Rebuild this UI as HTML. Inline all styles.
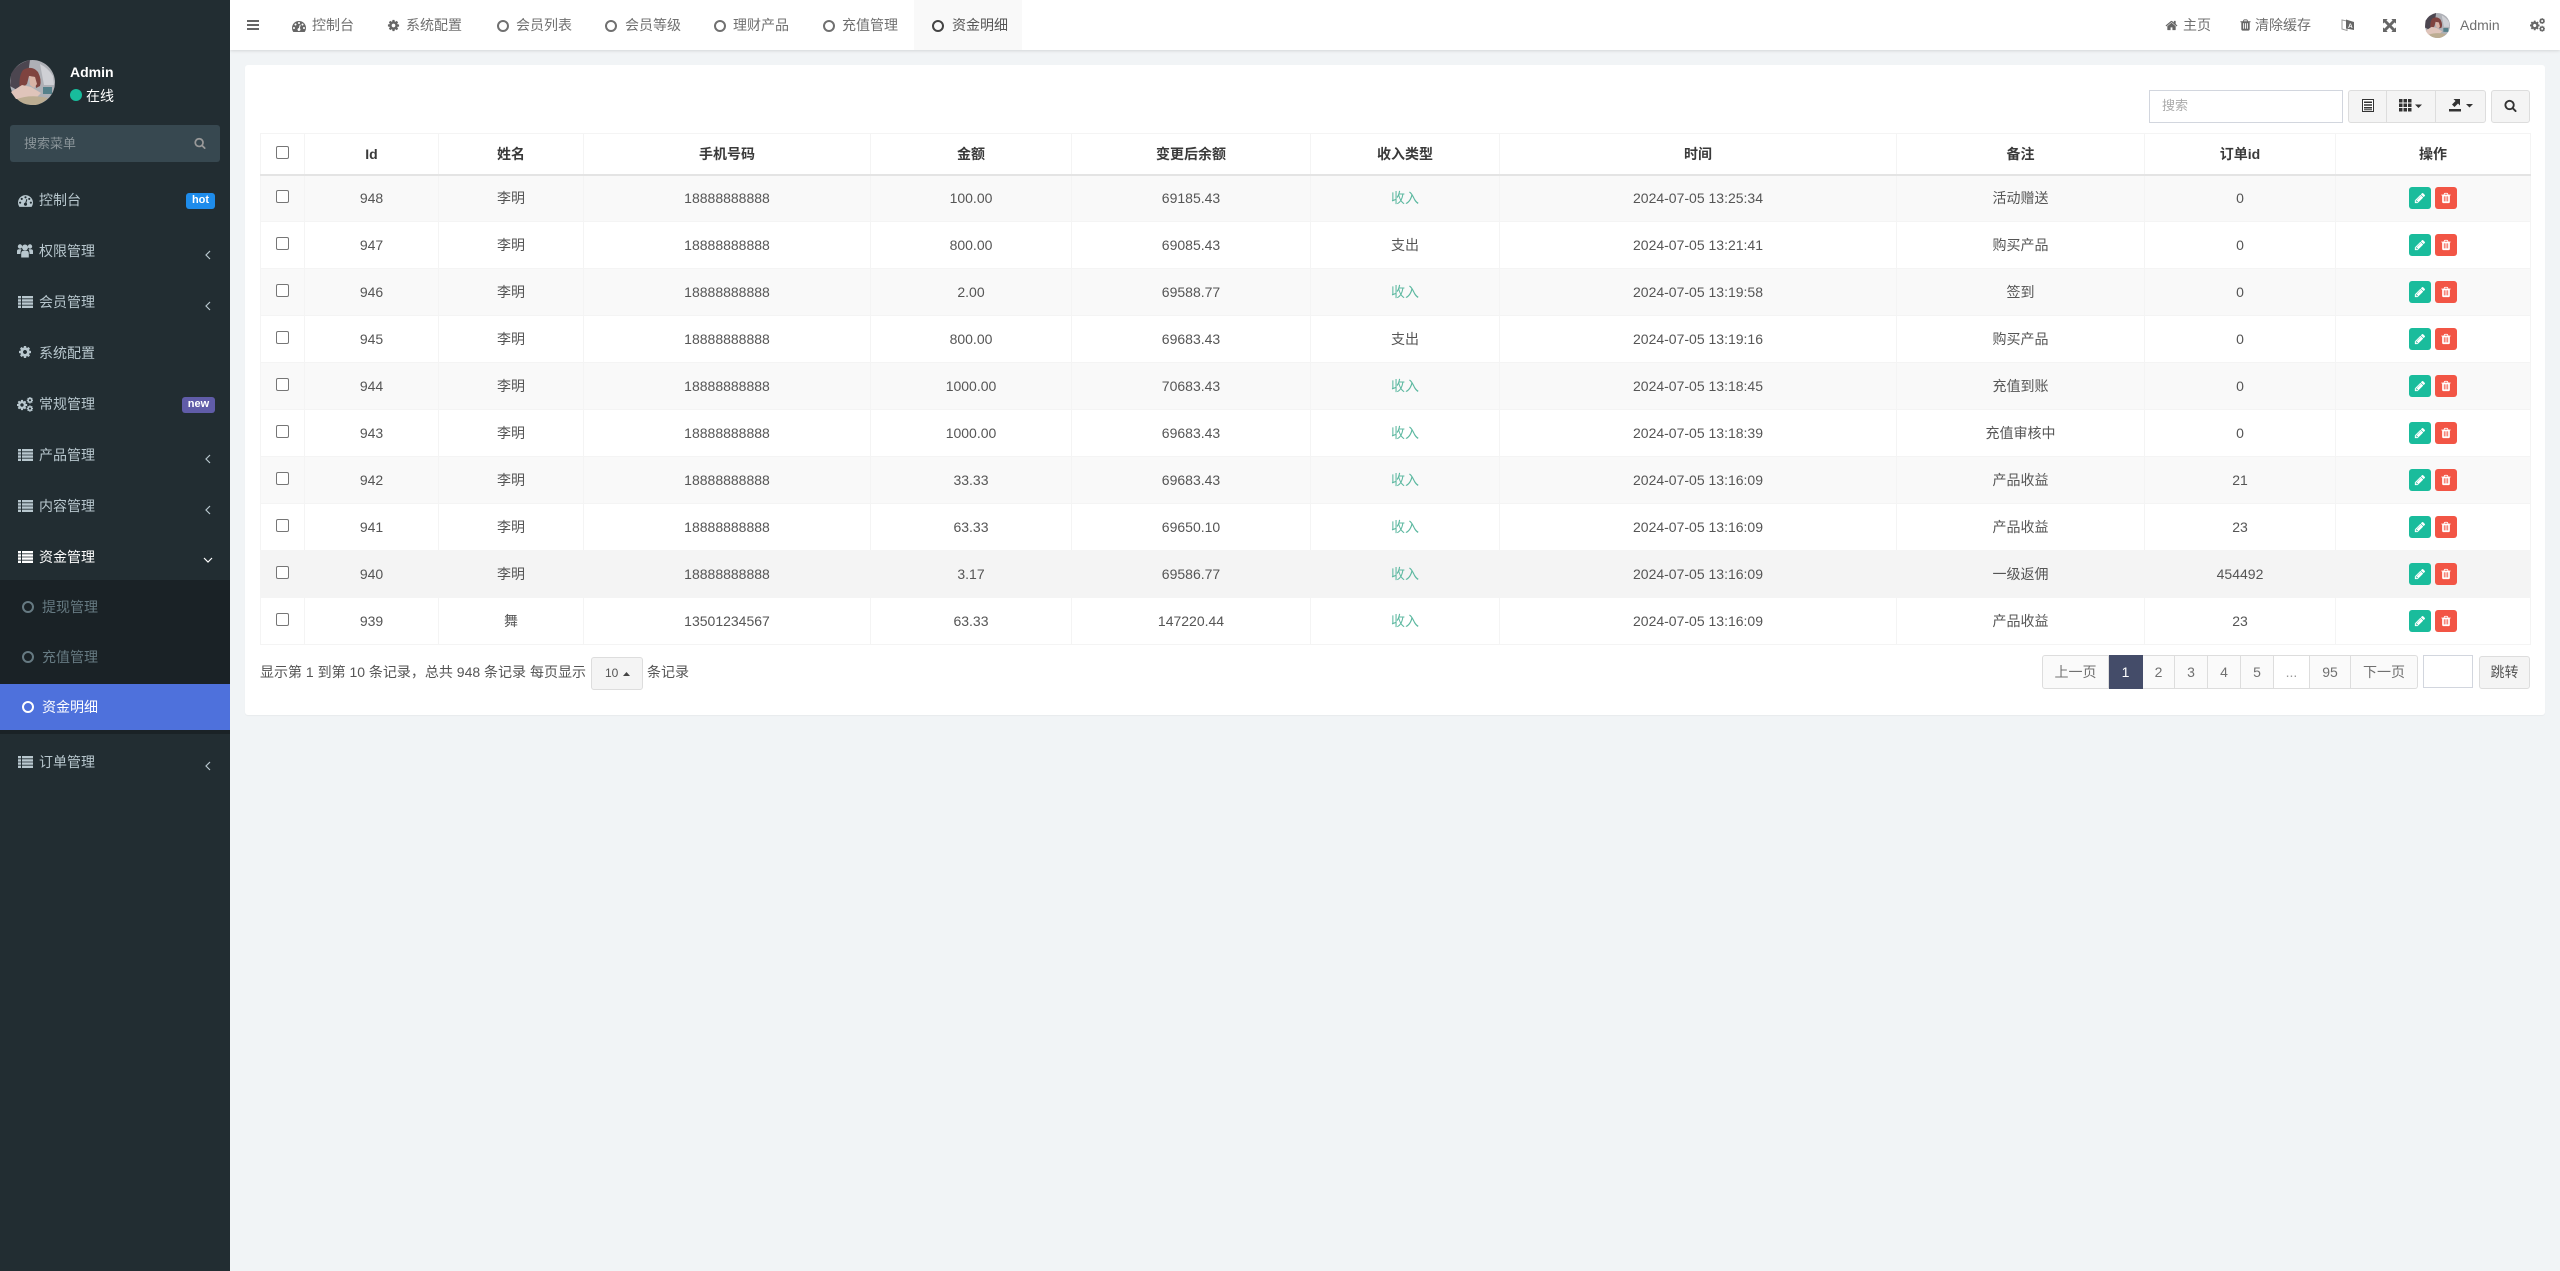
<!DOCTYPE html>
<html lang="zh"><head><meta charset="utf-8"><title>资金明细</title>
<style>
*{box-sizing:border-box}
html,body{margin:0;padding:0;width:2560px;height:1271px;overflow:hidden;background:#f1f4f6;font-family:"Liberation Sans","Noto Sans CJK SC",sans-serif;font-size:14px;color:#333}
.a{position:absolute;white-space:nowrap}
svg{display:block;position:absolute;overflow:visible}
#side{position:absolute;left:0;top:0;width:230px;height:1271px;background:#222d32}
#top{position:absolute;left:230px;top:0;width:2330px;height:50px;background:#fff;box-shadow:0 1px 3px rgba(0,0,0,.12)}
.m{position:absolute;left:39px;color:#b8c7ce;line-height:20px;height:20px;white-space:nowrap}
.i{fill:#b8c7ce}
.h{position:absolute;color:#707070;line-height:20px;top:15px;white-space:nowrap}
.hi{fill:#666}
#panel{position:absolute;left:245px;top:65px;width:2300px;height:650px;background:#fff;border-radius:3px;box-shadow:0 1px 1px rgba(0,0,0,.04)}
table{position:absolute;left:260px;top:133px;border-collapse:collapse;table-layout:fixed;width:2270px;font-size:14px}
th,td{border:1px solid #f4f4f4;text-align:center;padding:0;font-weight:normal;color:#555}
th{height:41px;font-weight:bold;color:#3a3a3a;border-bottom:2px solid #e4e4e4}
td{height:47px}
tbody tr:nth-child(odd){background:#f9f9f9}
tbody tr.hv{background:#f4f4f4}
td.g{color:#5cb8a0}
.cb{display:block;width:13px;height:13px;border:1px solid #767676;border-radius:2px;background:#fff;margin:-3px auto 0}
.ed,.de{display:inline-block;position:relative;width:22px;height:22px;border-radius:3px;vertical-align:middle}
.ed{background:#1abc9c;margin-right:4px}.de{background:#f25545}
.ed svg,.de svg{left:5px;top:5px;width:12px;height:12px;fill:#fff}
.btn{position:absolute;background:#f4f4f4;border:1px solid #ddd}
.pg{position:absolute;top:655px;height:34px;line-height:32px;text-align:center;background:#fafafa;border:1px solid #ddd;border-left:0;color:#707070}
</style></head><body>
<svg width="0" height="0" style="position:absolute"><defs>
<symbol id="cog" viewBox="0 0 1792 1792"><path d="M1152 896q0-106-75-181t-181-75-181 75-75 181 75 181 181 75 181-75 75-181zm512-109v222q0 12-8 23t-20 13l-185 28q-19 54-39 91 35 50 107 138 10 12 10 25t-9 23q-27 37-99 108t-94 71q-12 0-26-9l-138-108q-44 23-91 38-16 136-29 186-7 28-36 28h-222q-14 0-24.500-8.500t-11.500-21.500l-28-184q-49-16-90-37l-141 107q-10 9-25 9-14 0-25-11-126-114-165-168-7-10-7-23 0-12 8-23 15-21 51-66.500t54-70.500q-27-50-41-99l-183-27q-13-2-21-12.500t-8-23.500v-222q0-12 8-23t19-13l186-28q14-46 39-92-40-57-107-138-10-12-10-24 0-10 9-23 26-36 98.500-107.500t94.500-71.500q13 0 26 10l138 107q44-23 91-38 16-136 29-186 7-28 36-28h222q14 0 24.500 8.500t11.500 21.500l28 184q49 16 90 37l142-107q9-9 24-9 13 0 25 10 129 119 165 170 7 8 7 22 0 12-8 23-15 21-51 66.500t-54 70.500q26 50 41 98l183 28q13 2 21 12.500t8 23.500z"/></symbol>
<symbol id="dash" viewBox="0 0 1792 1792"><path d="M384 1152q0-53-37.500-90.500t-90.500-37.500-90.500 37.500-37.500 90.500 37.500 90.500 90.500 37.500 90.500-37.500 37.500-90.500zm192-448q0-53-37.500-90.500t-90.500-37.500-90.500 37.500-37.500 90.500 37.500 90.500 90.500 37.500 90.500-37.500 37.500-90.500zm428 481l101-382q6-26-7.500-48.500t-38.500-29.500-48 6.500-30 39.500l-101 382q-60 5-107 43.500t-63 98.500q-20 77 20 146t117 89 146-20 89-117q16-60-6-117t-72-91zm660-33q0-53-37.500-90.500t-90.500-37.500-90.500 37.500-37.500 90.500 37.500 90.500 90.500 37.500 90.500-37.500 37.500-90.500zm-640-640q0-53-37.500-90.500t-90.500-37.500-90.500 37.500-37.500 90.500 37.500 90.500 90.500 37.500 90.500-37.500 37.500-90.500zm448 192q0-53-37.500-90.500t-90.500-37.500-90.500 37.500-37.500 90.500 37.500 90.500 90.500 37.500 90.500-37.500 37.500-90.500zm320 448q0 261-141 483-19 29-54 29h-1402q-35 0-54-29-141-221-141-483 0-182 71-348t191-286 286-191 348-71 348 71 286 191 191 286 71 348z"/></symbol>
<symbol id="list" viewBox="0 0 15 12"><path d="M0 0h3v2.400H0zM4 0h11v2.400H4zM0 3.200h3v2.400H0zM4 3.200h11v2.400H4zM0 6.400h3v2.400H0zM4 6.400h11v2.400H4zM0 9.600h3V12H0zM4 9.600h11V12H4z"/></symbol>
<symbol id="cogs" viewBox="0 0 16 15"><use href="#cog" x="-1" y="2" width="12" height="12"/><use href="#cog" x="9.200" y="-.5" width="7.500" height="7.500"/><use href="#cog" x="9.200" y="7.800" width="7.500" height="7.500"/></symbol>
<symbol id="trash" viewBox="0 0 1792 1792"><path d="M704 1376v-704q0-14-9-23t-23-9h-64q-14 0-23 9t-9 23v704q0 14 9 23t23 9h64q14 0 23-9t9-23zm256 0v-704q0-14-9-23t-23-9h-64q-14 0-23 9t-9 23v704q0 14 9 23t23 9h64q14 0 23-9t9-23zm256 0v-704q0-14-9-23t-23-9h-64q-14 0-23 9t-9 23v704q0 14 9 23t23 9h64q14 0 23-9t9-23zm-544-992h448l-48-117q-7-9-17-11h-317q-10 2-17 11zm928 32v64q0 14-9 23t-23 9h-96v948q0 83-47 143.500t-113 60.500h-832q-66 0-113-58.500t-47-141.500v-952h-96q-14 0-23-9t-9-23v-64q0-14 9-23t23-9h309l70-167q15-37 54-63t79-26h320q40 0 79 26t54 63l70 167h309q14 0 23 9t9 23z"/></symbol>
<symbol id="pen" viewBox="0 0 1792 1792"><path d="M491 1536l91-91-235-235-91 91v107h128v128h107zm523-928q0-22-22-22-10 0-17 7l-542 542q-7 7-7 17 0 22 22 22 10 0 17-7l542-542q7-7 7-17zm-54-192l416 416-832 832h-416v-416zm683 96q0 53-37 90l-166 166-416-416 166-165q36-38 90-38 53 0 91 38l235 234q37 39 37 91z"/></symbol>
<symbol id="search" viewBox="0 0 1792 1792"><path d="M1216 832q0-185-131.500-316.500t-316.500-131.500-316.500 131.500-131.500 316.500 131.500 316.500 316.500 131.500 316.500-131.500 131.500-316.500zm512 832q0 52-38 90t-90 38q-54 0-90-38l-343-342q-179 124-399 124-143 0-273.500-55.500t-225-150-150-225-55.500-273.500 55.500-273.500 150-225 225-150 273.500-55.500 273.500 55.500 225 150 150 225 55.500 273.500q0 220-124 399l343 343q37 37 37 90z"/></symbol>
<symbol id="home" viewBox="0 0 1792 1792"><path d="M1472 992v480q0 26-19 45t-45 19h-384v-384h-256v384h-384q-26 0-45-19t-19-45v-480q0-1 .5-3t.5-3l575-474 575 474q1 2 1 6zm223-69l-62 74q-8 9-21 11h-3q-13 0-21-7l-692-577-692 577q-12 8-24 7-13-2-21-11l-62-74q-8-10-7-23.500t11-21.500l719-599q32-26 76-26t76 26l244 204v-195q0-14 9-23t23-9h192q14 0 23 9t9 23v408l219 182q10 8 11 21.500t-7 23.500z"/></symbol>
<symbol id="ava" viewBox="0 0 45 45"><circle cx="22.500" cy="22.500" r="22.500" fill="#aeb0b6"/><path d="M1 14Q7 3 20 0L18 14 7 30 0 26Z" fill="#4c4650"/><path d="M13 10Q22 5 28 12 32 20 30 26L26 28 25 17 19 16 17 24 10 30Q8 17 13 10Z" fill="#7f433f"/><path d="M19 16L25 17 27 24 24 28 20 25Z" fill="#d9b3a6"/><path d="M1 32L12 25 21 27 31 33 27 37 15 39 6 39Z" fill="#dfc4ba"/><path d="M7 39Q20 34 38 38 30 46 22 45 13 45 7 39Z" fill="#bcad92"/><path d="M33 27h9v7h-9z" fill="#55808a"/><path d="M30 4Q38 8 43 16L44 25 34 25Z" fill="#cfd0d5"/></symbol>
</defs></svg>

<div id="top"></div>
<div id="side">
<svg style="left:10px;top:60px" width="45" height="45"><use href="#ava"/></svg>
<div class="a" style="left:70px;top:64px;color:#fff;font-weight:bold;line-height:16px">Admin</div>
<div class="a" style="left:70px;top:89px;width:12px;height:12px;border-radius:50%;background:#18bc9c"></div>
<div class="a" style="left:86px;top:86px;color:#fff;line-height:20px">在线</div>
<div class="a" style="left:10px;top:125px;width:210px;height:37px;background:#374850;border-radius:3px"></div>
<div class="a" style="left:24px;top:134px;color:#8a9499;font-size:13px;line-height:19px">搜索菜单</div>
<svg style="left:194px;top:137px;fill:#999" width="12" height="12"><use href="#search"/></svg>

<svg class="i" style="left:18px;top:193px" width="15" height="15"><use href="#dash"/></svg><div class="m" style="top:190px">控制台</div>
<div class="a" style="left:186px;top:193px;width:29px;height:16px;background:#1e8ceb;border-radius:3px;color:#fff;font-size:11px;font-weight:bold;text-align:center;line-height:15px">hot</div>

<svg class="i" style="left:17px;top:244px" width="16" height="14" viewBox="0 0 16 14"><circle cx="3" cy="2.500" r="2.200"/><circle cx="13" cy="2.500" r="2.200"/><circle cx="8" cy="3.500" r="3"/><path d="M0 10V7q0-1.800 2-1.800h2.500Q3.300 7 3.500 10zM16 10V7q0-1.800-2-1.800h-2.500q1.200 1.800 1 4.800zM4.200 13.500V9.500q0-2.800 2.300-2.800h3q2.300 0 2.300 2.800v4z"/></svg><div class="m" style="top:241px">权限管理</div>
<svg style="left:204px;top:250px;fill:none;stroke:#b8c7ce;stroke-width:1.200" width="8" height="10"><path d="M6 1L2 5l4 4"/></svg>

<svg class="i" style="left:18px;top:296px" width="15" height="12"><use href="#list"/></svg><div class="m" style="top:292px">会员管理</div>
<svg style="left:204px;top:301px;fill:none;stroke:#b8c7ce;stroke-width:1.200" width="8" height="10"><path d="M6 1L2 5l4 4"/></svg>

<svg class="i" style="left:18px;top:345px" width="14" height="14"><use href="#cog"/></svg><div class="m" style="top:343px">系统配置</div>

<svg class="i" style="left:17px;top:397px" width="16" height="15"><use href="#cogs"/></svg><div class="m" style="top:394px">常规管理</div>
<div class="a" style="left:182px;top:397px;width:33px;height:16px;background:#605ca8;border-radius:3px;color:#fff;font-size:11px;font-weight:bold;text-align:center;line-height:15px">new</div>

<svg class="i" style="left:18px;top:449px" width="15" height="12"><use href="#list"/></svg><div class="m" style="top:445px">产品管理</div>
<svg style="left:204px;top:454px;fill:none;stroke:#b8c7ce;stroke-width:1.200" width="8" height="10"><path d="M6 1L2 5l4 4"/></svg>

<svg class="i" style="left:18px;top:500px" width="15" height="12"><use href="#list"/></svg><div class="m" style="top:496px">内容管理</div>
<svg style="left:204px;top:505px;fill:none;stroke:#b8c7ce;stroke-width:1.200" width="8" height="10"><path d="M6 1L2 5l4 4"/></svg>

<svg style="left:18px;top:551px;fill:#fff" width="15" height="12"><use href="#list"/></svg><div class="m" style="top:547px;color:#fff">资金管理</div>
<svg style="left:203px;top:556px;fill:none;stroke:#fff;stroke-width:1.200" width="10" height="8"><path d="M1 2l4 4 4-4"/></svg>

<div class="a" style="left:0;top:580px;width:230px;height:154px;background:#1a2226"></div>
<svg style="left:22px;top:601px;fill:none;stroke:#667a82;stroke-width:2" width="12" height="12"><circle cx="6" cy="6" r="5"/></svg><div class="m" style="left:42px;top:597px;color:#667a82">提现管理</div>
<svg style="left:22px;top:651px;fill:none;stroke:#667a82;stroke-width:2" width="12" height="12"><circle cx="6" cy="6" r="5"/></svg><div class="m" style="left:42px;top:647px;color:#667a82">充值管理</div>
<div class="a" style="left:0;top:684px;width:230px;height:46px;background:#4e71dc"></div>
<svg style="left:22px;top:701px;fill:none;stroke:#fff;stroke-width:2" width="12" height="12"><circle cx="6" cy="6" r="5"/></svg><div class="m" style="left:42px;top:697px;color:#fff">资金明细</div>

<svg class="i" style="left:18px;top:756px" width="15" height="12"><use href="#list"/></svg><div class="m" style="top:752px">订单管理</div>
<svg style="left:204px;top:761px;fill:none;stroke:#b8c7ce;stroke-width:1.200" width="8" height="10"><path d="M6 1L2 5l4 4"/></svg>
</div>

<!-- header -->
<svg style="left:247px;top:20px;fill:#666" width="12" height="10"><path d="M0 0h12v2H0zM0 4h12v2H0zM0 8h12v2H0z"/></svg>
<svg class="hi" style="left:292px;top:19px" width="14" height="14"><use href="#dash"/></svg><div class="h" style="left:312px">控制台</div>
<svg class="hi" style="left:387px;top:19px" width="13" height="13"><use href="#cog"/></svg><div class="h" style="left:406px">系统配置</div>
<svg style="left:497px;top:20px;fill:none;stroke:#707070;stroke-width:2" width="12" height="12"><circle cx="6" cy="6" r="5"/></svg><div class="h" style="left:516px">会员列表</div>
<svg style="left:605px;top:20px;fill:none;stroke:#707070;stroke-width:2" width="12" height="12"><circle cx="6" cy="6" r="5"/></svg><div class="h" style="left:625px">会员等级</div>
<svg style="left:714px;top:20px;fill:none;stroke:#707070;stroke-width:2" width="12" height="12"><circle cx="6" cy="6" r="5"/></svg><div class="h" style="left:733px">理财产品</div>
<svg style="left:823px;top:20px;fill:none;stroke:#707070;stroke-width:2" width="12" height="12"><circle cx="6" cy="6" r="5"/></svg><div class="h" style="left:842px">充值管理</div>
<div class="a" style="left:914px;top:0;width:108px;height:50px;background:#f9f9f9"></div>
<svg style="left:932px;top:20px;fill:none;stroke:#444;stroke-width:2" width="12" height="12"><circle cx="6" cy="6" r="5"/></svg><div class="h" style="left:952px;color:#555">资金明细</div>

<svg class="hi" style="left:2165px;top:19px" width="13" height="13"><use href="#home"/></svg><div class="h" style="left:2183px">主页</div>
<svg class="hi" style="left:2239px;top:18px" width="13" height="14"><use href="#trash"/></svg><div class="h" style="left:2255px">清除缓存</div>
<svg style="left:2341px;top:18px" width="14" height="14" viewBox="0 0 14 14"><path d="M1 2l5 1v9.500L1 11z" fill="#fff" stroke="#999" stroke-width="1"/><path d="M5 1.500l8 2.500v8l-8-1.500z" fill="#666"/><text x="7" y="10" font-size="6.500" font-weight="bold" fill="#fff" font-family="Liberation Sans">A</text></svg>
<svg style="left:2383px;top:19px;fill:#666" width="13" height="13" viewBox="0 0 14 14"><path d="M0 0h5L3.700 1.500 7 4.800 10.300 1.500 9 0h5v5l-1.500-1.300L9.200 7l3.300 3.300L14 9v5H9l1.300-1.500L7 9.200l-3.300 3.300L5 14H0V9l1.500 1.300L4.800 7 1.500 3.700 0 5z"/></svg>
<svg style="left:2425px;top:13px" width="25" height="25"><use href="#ava"/></svg>
<div class="h" style="left:2460px">Admin</div>
<svg class="hi" style="left:2530px;top:18px" width="15" height="14"><use href="#cogs"/></svg>

<div id="panel"></div>

<!-- toolbar -->
<div class="a" style="left:2149px;top:90px;width:194px;height:33px;border:1px solid #d2d6de;background:#fff"></div>
<div class="a" style="left:2162px;top:96px;color:#aaa;font-size:13px;line-height:20px">搜索</div>
<div class="btn" style="left:2348px;top:90px;width:39px;height:33px;border-radius:3px 0 0 3px"></div>
<svg style="left:2362px;top:99px" width="12" height="13" viewBox="0 0 12 13"><path d="M.5.500h11v12H.500z" fill="#fff" stroke="#333"/><path d="M2 2.500h8v1.500H2zM2 5.200h8v1.500H2zM2 8h8v1.500H2zM2 10.200h8v1H2z" fill="#333"/></svg>
<div class="btn" style="left:2386px;top:90px;width:50px;height:33px"></div>
<svg style="left:2399px;top:99px;fill:#333" width="24" height="13" viewBox="0 0 24 13"><path d="M0 0h3.500v3.500H0zM4.500 0H8v3.500H4.500zM9 0h3.500v3.500H9zM0 4.500h3.500V8H0zM4.500 4.500H8V8H4.500zM9 4.500h3.500V8H9zM0 9h3.500v3.500H0zM4.500 9H8v3.500H4.500zM9 9h3.500v3.500H9zM16 5.500h7l-3.500 3.500z"/></svg>
<div class="btn" style="left:2435px;top:90px;width:51px;height:33px;border-radius:0 3px 3px 0"></div>
<svg style="left:2449px;top:98px;fill:#333" width="26" height="14" viewBox="0 0 26 14"><path d="M0 11h12v2.500H0z"/><path d="M4.500 1H11v6.500L9 5.500 5.500 9 3 6.500 6.500 3z"/><path d="M17 6h7l-3.500 3.500z"/></svg>
<div class="btn" style="left:2491px;top:90px;width:39px;height:33px;border-radius:3px"></div>
<svg style="left:2504px;top:99px;fill:#333" width="13" height="13"><use href="#search"/></svg>

<table>
<colgroup><col style="width:44px"><col style="width:134px"><col style="width:145px"><col style="width:287px"><col style="width:201px"><col style="width:239px"><col style="width:189px"><col style="width:397px"><col style="width:248px"><col style="width:191px"><col style="width:195px"></colgroup>
<thead><tr><th><span class="cb"></span></th><th>Id</th><th>姓名</th><th>手机号码</th><th>金额</th><th>变更后余额</th><th>收入类型</th><th>时间</th><th>备注</th><th>订单id</th><th>操作</th></tr></thead>
<tbody>
<tr><td><span class="cb"></span></td><td>948</td><td>李明</td><td>18888888888</td><td>100.00</td><td>69185.43</td><td class="g">收入</td><td>2024-07-05 13:25:34</td><td>活动赠送</td><td>0</td><td><span class="ed"><svg><use href="#pen"/></svg></span><span class="de"><svg><use href="#trash"/></svg></span></td></tr>
<tr><td><span class="cb"></span></td><td>947</td><td>李明</td><td>18888888888</td><td>800.00</td><td>69085.43</td><td>支出</td><td>2024-07-05 13:21:41</td><td>购买产品</td><td>0</td><td><span class="ed"><svg><use href="#pen"/></svg></span><span class="de"><svg><use href="#trash"/></svg></span></td></tr>
<tr><td><span class="cb"></span></td><td>946</td><td>李明</td><td>18888888888</td><td>2.00</td><td>69588.77</td><td class="g">收入</td><td>2024-07-05 13:19:58</td><td>签到</td><td>0</td><td><span class="ed"><svg><use href="#pen"/></svg></span><span class="de"><svg><use href="#trash"/></svg></span></td></tr>
<tr><td><span class="cb"></span></td><td>945</td><td>李明</td><td>18888888888</td><td>800.00</td><td>69683.43</td><td>支出</td><td>2024-07-05 13:19:16</td><td>购买产品</td><td>0</td><td><span class="ed"><svg><use href="#pen"/></svg></span><span class="de"><svg><use href="#trash"/></svg></span></td></tr>
<tr><td><span class="cb"></span></td><td>944</td><td>李明</td><td>18888888888</td><td>1000.00</td><td>70683.43</td><td class="g">收入</td><td>2024-07-05 13:18:45</td><td>充值到账</td><td>0</td><td><span class="ed"><svg><use href="#pen"/></svg></span><span class="de"><svg><use href="#trash"/></svg></span></td></tr>
<tr><td><span class="cb"></span></td><td>943</td><td>李明</td><td>18888888888</td><td>1000.00</td><td>69683.43</td><td class="g">收入</td><td>2024-07-05 13:18:39</td><td>充值审核中</td><td>0</td><td><span class="ed"><svg><use href="#pen"/></svg></span><span class="de"><svg><use href="#trash"/></svg></span></td></tr>
<tr><td><span class="cb"></span></td><td>942</td><td>李明</td><td>18888888888</td><td>33.33</td><td>69683.43</td><td class="g">收入</td><td>2024-07-05 13:16:09</td><td>产品收益</td><td>21</td><td><span class="ed"><svg><use href="#pen"/></svg></span><span class="de"><svg><use href="#trash"/></svg></span></td></tr>
<tr><td><span class="cb"></span></td><td>941</td><td>李明</td><td>18888888888</td><td>63.33</td><td>69650.10</td><td class="g">收入</td><td>2024-07-05 13:16:09</td><td>产品收益</td><td>23</td><td><span class="ed"><svg><use href="#pen"/></svg></span><span class="de"><svg><use href="#trash"/></svg></span></td></tr>
<tr class="hv"><td><span class="cb"></span></td><td>940</td><td>李明</td><td>18888888888</td><td>3.17</td><td>69586.77</td><td class="g">收入</td><td>2024-07-05 13:16:09</td><td>一级返佣</td><td>454492</td><td><span class="ed"><svg><use href="#pen"/></svg></span><span class="de"><svg><use href="#trash"/></svg></span></td></tr>
<tr><td><span class="cb"></span></td><td>939</td><td>舞</td><td>13501234567</td><td>63.33</td><td>147220.44</td><td class="g">收入</td><td>2024-07-05 13:16:09</td><td>产品收益</td><td>23</td><td><span class="ed"><svg><use href="#pen"/></svg></span><span class="de"><svg><use href="#trash"/></svg></span></td></tr>
</tbody></table>

<div class="a" style="left:260px;top:662px;line-height:20px;color:#555">显示第 1 到第 10 条记录，总共 948 条记录 每页显示</div>
<div class="btn" style="left:591px;top:657px;width:52px;height:33px;border-radius:3px;line-height:31px;padding-left:13px;color:#555;font-size:12px">10</div>
<svg style="left:623px;top:672px;fill:#444" width="7" height="4"><path d="M0 4L3.500 0 7 4z"/></svg>
<div class="a" style="left:647px;top:662px;line-height:20px;color:#555">条记录</div>

<div class="pg" style="left:2042px;width:67px;border-left:1px solid #ddd;border-radius:3px 0 0 3px">上一页</div>
<div class="pg" style="left:2109px;width:34px;background:#444c69;border-color:#444c69;color:#fff">1</div>
<div class="pg" style="left:2143px;width:32px">2</div>
<div class="pg" style="left:2175px;width:33px">3</div>
<div class="pg" style="left:2208px;width:33px">4</div>
<div class="pg" style="left:2241px;width:33px">5</div>
<div class="pg" style="left:2274px;width:36px;background:#fff;color:#999">...</div>
<div class="pg" style="left:2310px;width:41px">95</div>
<div class="pg" style="left:2351px;width:67px;border-radius:0 3px 3px 0">下一页</div>
<div class="a" style="left:2423px;top:655px;width:50px;height:33px;border:1px solid #d2d6de;background:#fff"></div>
<div class="btn" style="left:2479px;top:656px;width:51px;height:33px;border-radius:3px;text-align:center;line-height:31px;color:#555">跳转</div>
</body></html>
